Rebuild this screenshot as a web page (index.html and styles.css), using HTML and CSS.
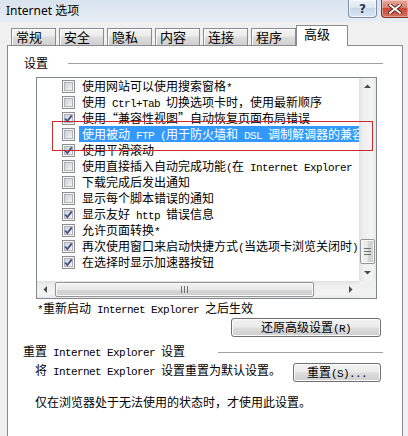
FILE: index.html
```html
<!DOCTYPE html>
<html lang="zh-CN">
<head>
<meta charset="utf-8">
<title>Internet 选项</title>
<link rel="stylesheet" href="styles.css">
</head>
<body>
<svg class="defs" width="0" height="0" aria-hidden="true">
  <defs>
    <linearGradient id="cbfill" x1="0" y1="0" x2="1" y2="1">
      <stop offset="0" stop-color="#c9cdd3"/>
      <stop offset="1" stop-color="#f7f7f7"/>
    </linearGradient>
  </defs>
</svg>
<div class="window">
  <div class="titlebar">
    <span class="title">Internet 选项</span>
    <div class="caption-btns">
      <div class="cbtn help">?</div>
      <div class="cbtn close">
        <svg width="14" height="10" viewBox="0 0 14 10"><path d="M2 1 12 9M12 1 2 9" stroke="#5a1d16" stroke-width="3.6" stroke-linecap="square"/><path d="M2 1 12 9M12 1 2 9" stroke="#ffffff" stroke-width="1.8" stroke-linecap="square"/></svg>
      </div>
    </div>
  </div>

  <div class="tabstrip">
    <div class="tab">常规</div>
    <div class="tab">安全</div>
    <div class="tab">隐私</div>
    <div class="tab">内容</div>
    <div class="tab">连接</div>
    <div class="tab last">程序</div>
    <div class="tab active">高级</div>
  </div>

  <div class="panel">
    <div class="group-head g1"><span class="glabel">设置</span><i class="rule"></i></div>

    <div class="listbox">
      <div class="list-content">
        <div class="item"><svg class="cb" viewBox="0 0 13 13"><rect x="0.5" y="0.5" width="12" height="12" fill="#f4f4f4" stroke="#8e8f8f"/><rect x="2.5" y="2.5" width="8" height="8" fill="url(#cbfill)" stroke="#b0b4ba"/></svg><span class="label">使用网站可以使用搜索窗格<span class="en">*</span></span></div>
        <div class="item"><svg class="cb" viewBox="0 0 13 13"><rect x="0.5" y="0.5" width="12" height="12" fill="#f4f4f4" stroke="#8e8f8f"/><rect x="2.5" y="2.5" width="8" height="8" fill="url(#cbfill)" stroke="#b0b4ba"/></svg><span class="label">使用<span class="en"> Ctrl+Tab </span>切换选项卡时，使用最新顺序</span></div>
        <div class="item"><svg class="cb" viewBox="0 0 13 13"><rect x="0.5" y="0.5" width="12" height="12" fill="#f4f4f4" stroke="#8e8f8f"/><rect x="2.5" y="2.5" width="8" height="8" fill="url(#cbfill)" stroke="#b0b4ba"/><path d="M3.2 6.6 5.4 9 9.8 3.4" fill="none" stroke="#3f5289" stroke-width="1.8"/></svg><span class="label">使用“兼容性视图”自动恢复页面布局错误</span></div>
        <div class="item selected"><svg class="cb" viewBox="0 0 13 13"><rect x="0.5" y="0.5" width="12" height="12" fill="#f4f4f4" stroke="#8e8f8f"/><rect x="2.5" y="2.5" width="8" height="8" fill="url(#cbfill)" stroke="#b0b4ba"/></svg><span class="label">使用被动<span class="en"> FTP (</span>用于防火墙和<span class="en"> DSL </span>调制解调器的兼容</span></div>
        <div class="item"><svg class="cb" viewBox="0 0 13 13"><rect x="0.5" y="0.5" width="12" height="12" fill="#f4f4f4" stroke="#8e8f8f"/><rect x="2.5" y="2.5" width="8" height="8" fill="url(#cbfill)" stroke="#b0b4ba"/><path d="M3.2 6.6 5.4 9 9.8 3.4" fill="none" stroke="#3f5289" stroke-width="1.8"/></svg><span class="label">使用平滑滚动</span></div>
        <div class="item"><svg class="cb" viewBox="0 0 13 13"><rect x="0.5" y="0.5" width="12" height="12" fill="#f4f4f4" stroke="#8e8f8f"/><rect x="2.5" y="2.5" width="8" height="8" fill="url(#cbfill)" stroke="#b0b4ba"/></svg><span class="label">使用直接插入自动完成功能<span class="en">(</span>在<span class="en"> Internet Explorer</span></span></div>
        <div class="item"><svg class="cb" viewBox="0 0 13 13"><rect x="0.5" y="0.5" width="12" height="12" fill="#f4f4f4" stroke="#8e8f8f"/><rect x="2.5" y="2.5" width="8" height="8" fill="url(#cbfill)" stroke="#b0b4ba"/></svg><span class="label">下载完成后发出通知</span></div>
        <div class="item"><svg class="cb" viewBox="0 0 13 13"><rect x="0.5" y="0.5" width="12" height="12" fill="#f4f4f4" stroke="#8e8f8f"/><rect x="2.5" y="2.5" width="8" height="8" fill="url(#cbfill)" stroke="#b0b4ba"/></svg><span class="label">显示每个脚本错误的通知</span></div>
        <div class="item"><svg class="cb" viewBox="0 0 13 13"><rect x="0.5" y="0.5" width="12" height="12" fill="#f4f4f4" stroke="#8e8f8f"/><rect x="2.5" y="2.5" width="8" height="8" fill="url(#cbfill)" stroke="#b0b4ba"/><path d="M3.2 6.6 5.4 9 9.8 3.4" fill="none" stroke="#3f5289" stroke-width="1.8"/></svg><span class="label">显示友好<span class="en"> http </span>错误信息</span></div>
        <div class="item"><svg class="cb" viewBox="0 0 13 13"><rect x="0.5" y="0.5" width="12" height="12" fill="#f4f4f4" stroke="#8e8f8f"/><rect x="2.5" y="2.5" width="8" height="8" fill="url(#cbfill)" stroke="#b0b4ba"/><path d="M3.2 6.6 5.4 9 9.8 3.4" fill="none" stroke="#3f5289" stroke-width="1.8"/></svg><span class="label">允许页面转换<span class="en">*</span></span></div>
        <div class="item"><svg class="cb" viewBox="0 0 13 13"><rect x="0.5" y="0.5" width="12" height="12" fill="#f4f4f4" stroke="#8e8f8f"/><rect x="2.5" y="2.5" width="8" height="8" fill="url(#cbfill)" stroke="#b0b4ba"/><path d="M3.2 6.6 5.4 9 9.8 3.4" fill="none" stroke="#3f5289" stroke-width="1.8"/></svg><span class="label">再次使用窗口来启动快捷方式<span class="en">(</span>当选项卡浏览关闭时<span class="en">)</span></span></div>
        <div class="item"><svg class="cb" viewBox="0 0 13 13"><rect x="0.5" y="0.5" width="12" height="12" fill="#f4f4f4" stroke="#8e8f8f"/><rect x="2.5" y="2.5" width="8" height="8" fill="url(#cbfill)" stroke="#b0b4ba"/><path d="M3.2 6.6 5.4 9 9.8 3.4" fill="none" stroke="#3f5289" stroke-width="1.8"/></svg><span class="label">在选择时显示加速器按钮</span></div>
      </div>

      <div class="vscroll">
        <div class="sarrow"><svg width="17" height="17" viewBox="0 0 17 17"><path d="M5 10 8.5 6.5 12 10Z" fill="#4a4a4a"/></svg></div>
        <div class="vtrack">
          <div class="vthumb"><i></i><i></i><i></i></div>
        </div>
        <div class="sarrow"><svg width="17" height="17" viewBox="0 0 17 17"><path d="M5 7 8.5 10.5 12 7Z" fill="#4a4a4a"/></svg></div>
      </div>

      <div class="hscroll">
        <div class="sarrow"><svg width="17" height="17" viewBox="0 0 17 17"><path d="M10 5 6.5 8.5 10 12Z" fill="#4a4a4a"/></svg></div>
        <div class="htrack">
          <div class="hthumb"><i></i><i></i><i></i></div>
        </div>
        <div class="sarrow"><svg width="17" height="17" viewBox="0 0 17 17"><path d="M7 5 10.5 8.5 7 12Z" fill="#4a4a4a"/></svg></div>
      </div>
      <div class="corner"></div>
    </div>

    <div class="note"><span class="en">*</span>重新启动<span class="en"> Internet Explorer </span>之后生效</div>
    <div class="btn-row"><button class="btn restore">还原高级设置<span class="en">(R)</span></button></div>

    <div class="group-head g2"><span class="glabel">重置<span class="en"> Internet Explorer </span>设置</span><i class="rule"></i></div>
    <div class="reset-row">
      <span class="reset-text">将<span class="en"> Internet Explorer </span>设置重置为默认设置。</span>
      <button class="btn reset">重置<span class="en">(S)...</span></button>
    </div>
    <div class="hint">仅在浏览器处于无法使用的状态时，才使用此设置。</div>
  </div>

  <div class="mark-box"></div>
</div>
</body>
</html>
```

FILE: styles.css
```css
* { box-sizing: border-box; }
html, body { margin: 0; padding: 0; }
body {
  width: 408px;
  height: 436px;
  overflow: hidden;
  background: #f0f0f0;
  font-family: "Noto Sans CJK SC", sans-serif;
  font-size: 12px;
  color: #000;
}
.defs { position: absolute; width: 0; height: 0; }
.window { position: relative; height: 436px; overflow: hidden; }

.en {
  font-family: "Liberation Mono", "DejaVu Sans Mono", monospace;
  font-size: 11px;
  letter-spacing: -0.6px;
}

/* title bar */
.titlebar {
  height: 22px;
  display: flex;
  justify-content: space-between;
  align-items: flex-start;
  background: linear-gradient(#d9e4ef, #e7edf4);
}
.title {
  padding-left: 6px;
  line-height: 22px;
  font-family: "Noto Sans", "Noto Sans CJK SC", sans-serif;
  font-size: 12px;
}
.caption-btns { display: flex; gap: 4px; }
.cbtn {
  height: 18px;
  border: 1px solid #7d8fa9;
  border-top: 0;
  border-radius: 0 0 4px 4px;
  display: flex;
  align-items: center;
  justify-content: center;
}
.help {
  width: 29px;
  background: linear-gradient(#eef3f9, #dce6f1 45%, #c8d7e8 50%, #d9e5f1);
  font-family: "DejaVu Sans", sans-serif;
  font-weight: bold;
  font-size: 12px;
  color: #23344f;
  text-shadow: 0 0 2px #fff;
  box-shadow: inset 0 0 0 1px rgba(255,255,255,0.6);
}
.close {
  width: 27px;
  border-color: #8a3327;
  border-right: 0;
  border-radius: 0 0 0 4px;
  background: linear-gradient(#eaa89a, #d9806f 45%, #c7493a 50%, #d4705f);
  box-shadow: inset 0 0 0 1px rgba(255,255,255,0.35);
}

/* tabs */
.tabstrip {
  height: 23px;
  display: flex;
  align-items: flex-end;
  padding-left: 11px;
}
.tab {
  width: 45px;
  height: 17px;
  margin-right: 3px;
  padding-left: 4px;
  border: 1px solid #898c95;
  border-bottom: 0;
  background: linear-gradient(#f4f4f4, #ececec 45%, #dddddd 50%, #d0d0d0);
  box-shadow: inset 1px 1px 0 #fcfcfc;
  font-size: 13px;
  line-height: 16px;
}
.tab.last { margin-right: 0; }
.tab.active {
  width: 52px;
  height: 21px;
  margin-right: 0;
  margin-bottom: -1px;
  padding-left: 7px;
  background: #fff;
  box-shadow: none;
  line-height: 15px;
  position: relative;
  z-index: 1;
}

/* panel */
.panel {
  margin-left: 7px;
  width: 396px;
  height: 391px;
  border: 1px solid #898c95;
  border-bottom: 0;
  background: #fff;
}
.group-head {
  display: flex;
  align-items: center;
  height: 16px;
  line-height: 16px;
  white-space: nowrap;
}
.g1 { margin-top: 9px; padding-left: 16px; }
.g1 .rule { margin-left: 20px; }
.g2 { margin-top: 7px; padding-left: 15px; }
.g2 .rule { margin-left: 33px; }
.rule {
  flex: 1;
  height: 1px;
  margin-right: 19px;
  background: #a0a0a0;
}

/* list box */
.listbox {
  margin: 6px 0 0 28px;
  width: 341px;
  height: 222px;
  border: 1px solid #828790;
  display: grid;
  grid-template-columns: 1fr 17px;
  grid-template-rows: 1fr 17px;
  background: #fff;
}
.list-content { overflow: hidden; min-width: 0; }
.item {
  display: flex;
  align-items: center;
  height: 16px;
  padding-left: 25px;
  white-space: nowrap;
}
.cb { flex: none; width: 13px; height: 13px; margin-right: 4px; }
.label {
  flex: none;
  padding: 0 3px;
  line-height: 16px;
  height: 16px;
}
.item.selected .label {
  flex: 1;
  background: #3399ff;
  color: #fff;
}

.vscroll {
  display: flex;
  flex-direction: column;
  background: linear-gradient(to right, #e2e2e2, #efefef 25%, #f4f4f4 75%, #e8e8e8);
}
.hscroll {
  display: flex;
  background: linear-gradient(#e2e2e2, #efefef 25%, #f4f4f4 75%, #e8e8e8);
}
.sarrow { flex: none; width: 17px; height: 17px; }
.sarrow svg { display: block; }
.vtrack {
  flex: 1;
  display: flex;
  flex-direction: column;
  justify-content: flex-end;
}
.vthumb {
  height: 25px;
  width: 15px;
  margin-left: 1px;
  border: 1px solid #959595;
  border-radius: 2px;
  background: linear-gradient(to right, #f3f3f3, #e8e8e8 50%, #d6d6d6 51%, #cfcfcf);
  box-shadow: inset 0 0 0 1px #fafafa;
  display: flex;
  flex-direction: column;
  align-items: center;
  justify-content: center;
  gap: 2px;
}
.vthumb i { display: block; width: 7px; height: 1px; background: #6f6f6f; }
.htrack { flex: 1; display: flex; }
.hthumb {
  width: 259px;
  height: 15px;
  margin: 1px 0 0 1px;
  border: 1px solid #959595;
  border-radius: 2px;
  background: linear-gradient(#f3f3f3, #e8e8e8 50%, #d6d6d6 51%, #cfcfcf);
  box-shadow: inset 0 0 0 1px #fafafa;
  display: flex;
  align-items: center;
  justify-content: center;
  gap: 2px;
}
.hthumb i { display: block; width: 1px; height: 7px; background: #6f6f6f; }
.corner { background: #f0f0f0; }

/* below list */
.note {
  margin-top: 1px;
  padding-left: 29px;
  line-height: 16px;
  height: 16px;
  white-space: nowrap;
}
.btn-row {
  display: flex;
  justify-content: flex-end;
  margin-top: 2px;
  padding-right: 21px;
}
.btn {
  font: inherit;
  color: #000;
  height: 19px;
  padding: 0;
  border: 1px solid #707070;
  border-radius: 3px;
  background: linear-gradient(#f2f2f2, #ebebeb 48%, #dddddd 52%, #cfcfcf);
  box-shadow: inset 0 0 0 1px #fbfbfb;
  line-height: 16px;
  white-space: nowrap;
}
.restore { width: 150px; }
.reset { width: 88px; margin: 1px 21px 0 auto; }
.reset-row {
  display: flex;
  align-items: flex-start;
  margin-top: 2px;
  padding-left: 27px;
}
.reset-text { line-height: 16px; white-space: nowrap; }
.hint {
  margin-top: 12px;
  padding-left: 27px;
  line-height: 16px;
  white-space: nowrap;
}

/* annotation rectangle drawn over the list */
.mark-box {
  position: absolute;
  left: 52px;
  top: 121px;
  width: 321px;
  height: 30px;
  border: 1px solid #cc2a2e;
  pointer-events: none;
}
```
